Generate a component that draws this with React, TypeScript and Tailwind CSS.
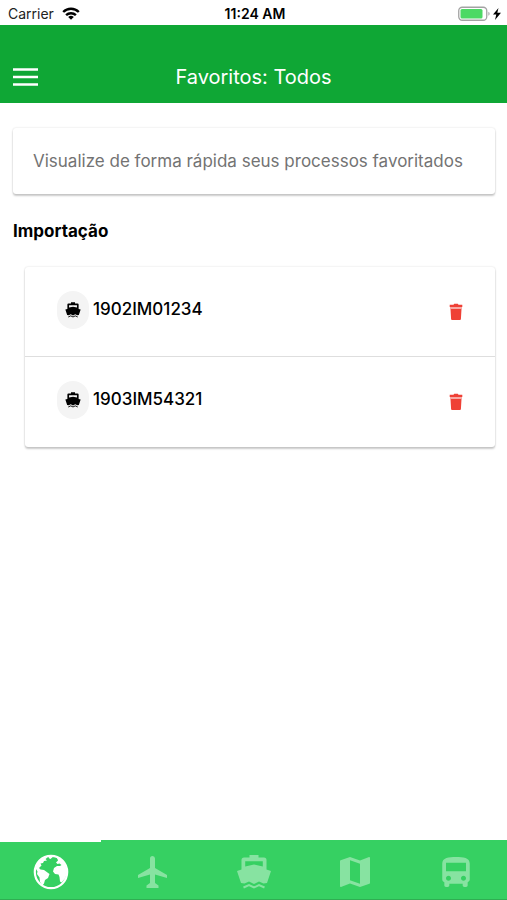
import type { ComponentType } from 'react';
import { IoMdBus, IoMdMap } from 'react-icons/io';
import { clsx } from 'clsx';

const processes = ['1902IM01234', '1903IM54321'];

const tabs: { label: string; icon: ComponentType<{ className?: string }> }[] = [
    { label: 'Todos', icon: EarthIcon },
    { label: 'Aéreo', icon: PlaneIcon },
    { label: 'Marítimo', icon: BoatIcon },
    { label: 'Mapa', icon: IoMdMap },
    { label: 'Rodoviário', icon: IoMdBus },
];

function EarthIcon({ className }: { className?: string }) {
    return (
        <svg viewBox="0 0 40 40" className={className} fill="currentColor" aria-hidden="true">
            <circle cx="20" cy="20" r="16.2" fill="none" stroke="currentColor" strokeWidth="2.2" />
            <path d="M4 17C5 11 9 6 14 4.500l2.500 1-2 1.500 1.500 1.500-3 .5-1 2-2.500.5 1 2-2.500 2.500 1.500 1.500 3.500.5 5.500 4-1.500 4-3 2-1 3.500-1.500 2-2.500-3.500-.5-4.500-2.500-3.500.5-2.500L5 17Z" />
            <path d="M17.500 4.500 21 3.800l.5 1.500-2 1.800-1.500-.8ZM25 5l4 1.500 4.500 5 2 5 .5 5-2 5-3.500 4-1.500-1-.5-4.500-1-2.500-3.500-.5-2-2.500 1-3.500 3-2h3l1.500-1-2-1.500-2 .5-1.500-1.500 2-2-.5-1.500Z" />
        </svg>
    );
}

function PlaneIcon({ className }: { className?: string }) {
    return (
        <svg viewBox="0 0 40 40" className={className} fill="currentColor" aria-hidden="true">
            <path d="M18 6.500a2.500 2.500 0 0 1 5 0V16l12 7v3l-12-3.500V31l3.500 2.500V36h-12v-2.500L18 31v-8.500L6 26v-3l12-7Z" />
        </svg>
    );
}

function BoatIcon({ className }: { className?: string }) {
    return (
        <svg viewBox="0 0 40 40" className={className} fill="currentColor" aria-hidden="true">
            <path
                fillRule="evenodd"
                d="M15.500 3h9v2.500H30a2.500 2.500 0 0 1 2.500 2.500v9.500L37 19l-4 12-3.500.5-4.500-2-5 2.500-5-2.500-4.500 2L7 31 3 19l4.500-1.500V8A2.500 2.500 0 0 1 10 5.500h5.500ZM11.200 9.200v5.300L20 12.500l8.800 2V9.200Z"
            />
            <path d="M9.500 35.500 15 33l5 2.500 5-2.500 5.500 2.500" fill="none" stroke="currentColor" strokeWidth="2" />
        </svg>
    );
}

function TrashIcon() {
    return (
        <svg viewBox="0 0 14 18" className="h-[18px] w-3.5" fill="currentColor" aria-hidden="true">
            <path d="M4.500 1.700 5.200.8h3.600l.7.9h3.800V4H.7V1.700Z" />
            <path d="M1 4h12v2H1Z" opacity="0.45" />
            <path d="M1.500 6h11l-.6 10.200a1 1 0 0 1-1 .8H3.100a1 1 0 0 1-1-.8Z" />
        </svg>
    );
}

function WifiIcon() {
    return (
        <svg viewBox="0 0 18 13" className="h-[13px] w-[18px] text-black" fill="none" stroke="currentColor" strokeWidth="2.4" aria-hidden="true">
            <path d="M1.200 5a11 11 0 0 1 15.600 0" />
            <path d="M4.100 8.200a7 7 0 0 1 9.800 0" />
            <path d="M9 12.800 6.200 10a4 4 0 0 1 5.600 0Z" fill="currentColor" stroke="none" />
        </svg>
    );
}

function BatteryIcon() {
    return (
        <svg viewBox="0 0 44 16" className="h-4 w-11" aria-hidden="true">
            <rect x="0.75" y="1.25" width="28" height="13" rx="3.5" fill="#fff" stroke="#a3a3a3" strokeWidth="1.3" />
            <rect x="2.5" y="3" width="22" height="9.5" rx="1.5" fill="#4cd964" />
            <path d="M30.400 5.800c1.600.6 1.600 3.400 0 4Z" fill="#a3a3a3" />
            <path d="M40.500 2 35 8.600h3.300L37 14l6-7.200h-3.700Z" fill="#000" />
        </svg>
    );
}

function StatusBar() {
    return (
        <div className="grid h-[25px] grid-cols-3 items-center pl-2 pr-[5px] pt-0.5 text-sm text-[#222]">
            <div className="flex items-center gap-2">
                <span>Carrier</span>
                <WifiIcon />
            </div>
            <span className="text-center font-semibold text-black">11:24 AM</span>
            <div className="flex justify-end">
                <BatteryIcon />
            </div>
        </div>
    );
}

export default function App() {
    return (
        <div className="flex min-h-screen flex-col bg-white font-['Inter','Liberation_Sans',sans-serif] text-black">
            <StatusBar />

            {/* Header */}
            <header className="grid h-[78px] grid-cols-[1fr_auto_1fr] items-end bg-[#0fa735] px-3 pb-3 text-white">
                <button type="button" aria-label="Menu" className="flex h-7 w-7 items-center">
                    <svg viewBox="0 0 28 28" className="h-7 w-7" stroke="currentColor" strokeWidth="2.5" aria-hidden="true">
                        <path d="M1 6.500h25M1 14h25M1 21.500h25" />
                    </svg>
                </button>
                <h1 className="text-xl leading-7">Favoritos: Todos</h1>
            </header>

            {/* Favorites */}
            <main className="flex-1 px-3 pt-[25px]">
                <p className="ml-px rounded-[3px] px-5 py-5 text-[17px] leading-[26px] text-[#737373] shadow-[0_2px_2px_rgba(0,0,0,0.2),0_0_2px_rgba(0,0,0,0.16)]">
                    Visualize de forma rápida seus processos favoritados
                </p>
                <h2 className="ml-px mt-[23px] text-[17px] font-bold leading-7">Importação</h2>
                <ul className="ml-[13px] mt-[22px] divide-y divide-[#dedede] rounded-[3px] shadow-[0_2px_2px_rgba(0,0,0,0.2),0_0_2px_rgba(0,0,0,0.16)]">
                    {processes.map((code) => (
                        <li key={code} className="flex h-[90px] items-center pb-1 pl-8 pr-8">
                            <span className="flex h-[38px] w-8 items-center justify-center rounded-full bg-[#f4f4f4]">
                                <BoatIcon className="h-[18px] w-[18px]" />
                            </span>
                            <span className="ml-1 flex-1 text-[17px] font-medium">{code}</span>
                            <button type="button" aria-label={`Remover ${code}`} className="pt-1 text-[#ef4136]">
                                <TrashIcon />
                            </button>
                        </li>
                    ))}
                </ul>
            </main>

            {/* Tabs */}
            <nav className="flex h-[60px] border-b border-[#2fae52] bg-[#36d062]">
                {tabs.map(({ label, icon: Icon }, index) => (
                    <button
                        key={label}
                        type="button"
                        aria-label={label}
                        className={clsx(
                            'flex flex-1 items-center justify-center border-t-2 pt-0.5',
                            index === 0 ? 'border-white text-white' : 'border-transparent text-[#87e3a1]'
                        )}
                    >
                        <Icon className="h-10 w-10" />
                    </button>
                ))}
            </nav>
        </div>
    );
}
